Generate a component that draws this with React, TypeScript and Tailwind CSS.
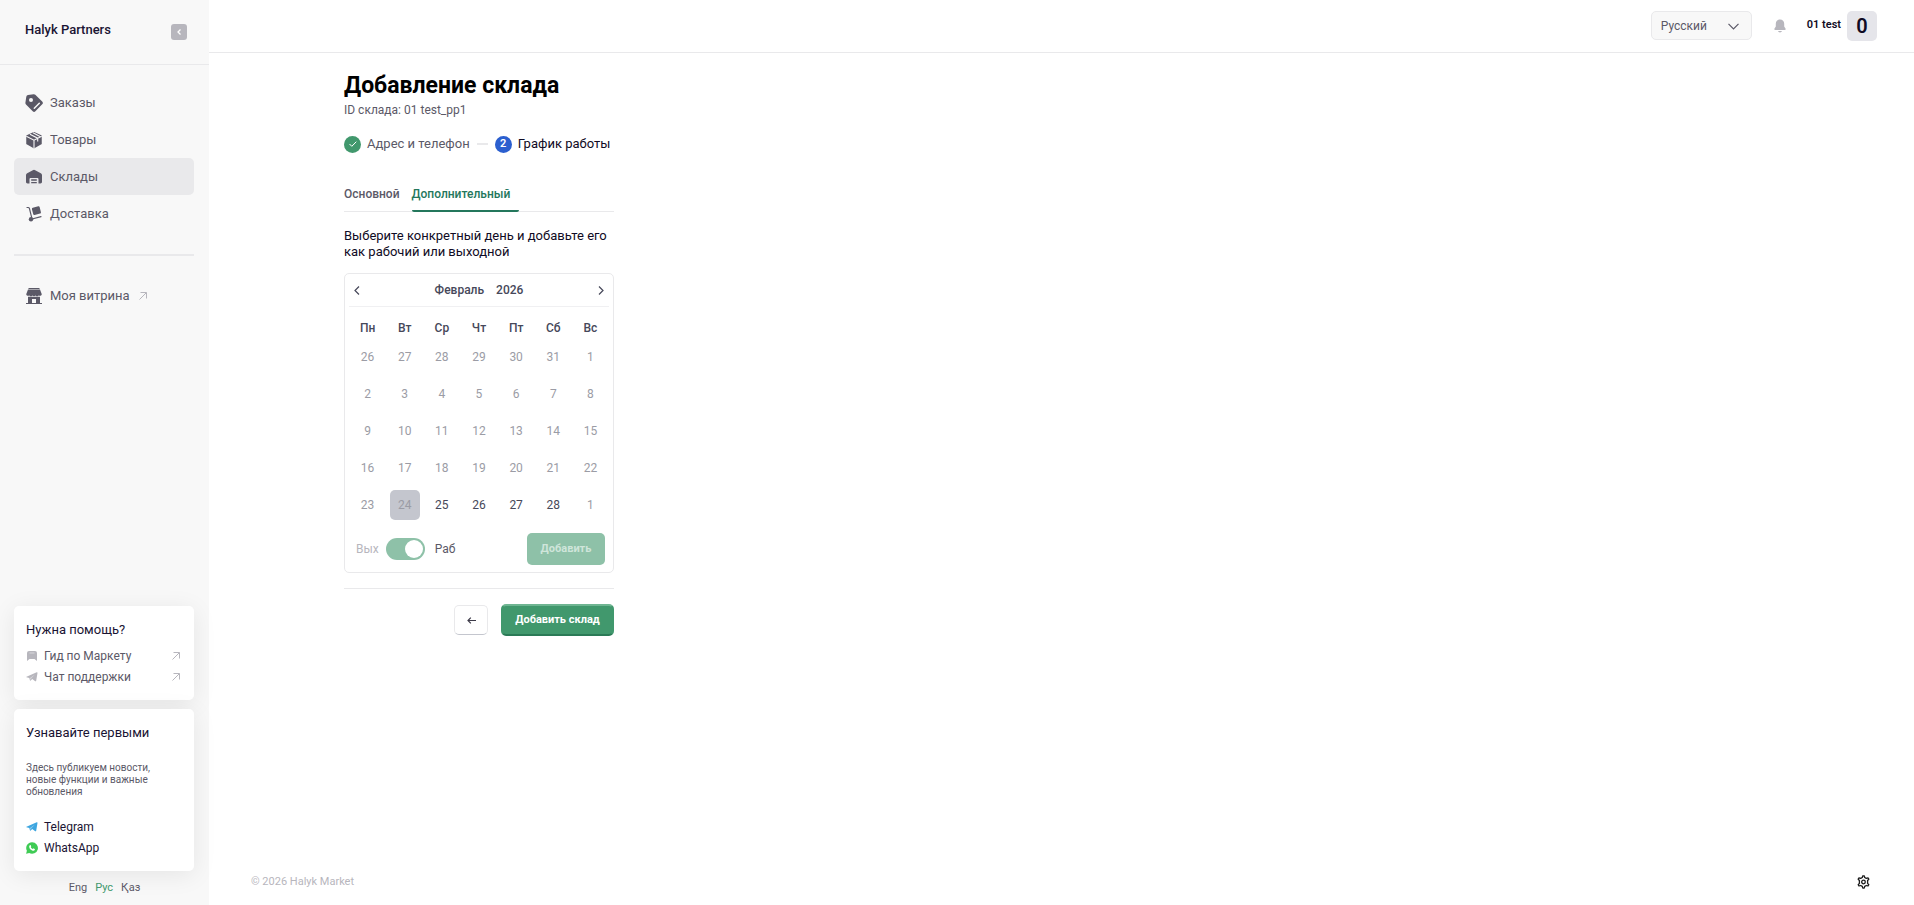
import React, { useState } from 'react';

const navItems = [
  { label: 'Заказы', icon: TagIcon },
  { label: 'Товары', icon: BoxIcon },
  { label: 'Склады', icon: WarehouseIcon },
  { label: 'Доставка', icon: TrolleyIcon },
];

const weekDays = ['Пн', 'Вт', 'Ср', 'Чт', 'Пт', 'Сб', 'Вс'];

const weeks = [
  [26, 27, 28, 29, 30, 31, 1],
  [2, 3, 4, 5, 6, 7, 8],
  [9, 10, 11, 12, 13, 14, 15],
  [16, 17, 18, 19, 20, 21, 22],
  [23, 24, 25, 26, 27, 28, 1],
];

function TagIcon() {
  return (
    <svg width="18" height="18" viewBox="0 0 18 18" fill="none">
      <path d="M3 1.1 8.6.2a2 2 0 0 1 1.7.5l6.900 6.900a1.900 1.900 0 0 1 0 2.700l-6.800 6.900a1.900 1.900 0 0 1-2.700 0L1 10.500a2 2 0 0 1-.6-1.700L1.300 2.700A2 2 0 0 1 3 1.100Z" fill="#5b5967" />
      <circle cx="6" cy="6" r="2" fill="#f8f8f8" />
      <path d="m9.300 14.300 5-5" stroke="#f8f8f8" strokeWidth="1.500" strokeLinecap="round" />
    </svg>
  );
}

function BoxIcon() {
  return (
    <svg width="18" height="18" viewBox="0 0 18 18" fill="none">
      <path d="m9 1.800 7 3.200v7.700l-7 3.800-7-3.800V5l7-3.200Z" fill="#5b5967" stroke="#5b5967" strokeWidth="1.500" strokeLinejoin="round" />
      <path d="M1.300 5.300 9 9.200l7.700-3.900M9 9.200v8.100M4.900 3.200l7.800 4v3.300M8 1.700l7.400 4" stroke="#f8f8f8" strokeWidth="1.100" />
    </svg>
  );
}

function WarehouseIcon() {
  return (
    <svg width="18" height="18" viewBox="0 0 18 18" fill="none">
      <path d="M1 7.300c0-.9.400-1.600 1.200-2L7.800 2.200a2.500 2.500 0 0 1 2.400 0l5.600 3.100c.8.400 1.200 1.100 1.200 2v6.500c0 1-.6 1.700-1.600 1.700h-1.900v-4.300c0-.8-.5-1.200-1.200-1.200H5.700c-.7 0-1.200.4-1.200 1.200v4.300H2.600c-1 0-1.600-.7-1.600-1.700V7.300Z" fill="#5b5967" />
      <path d="M6.200 12h5.600M6.200 14.700h5.600" stroke="#5b5967" strokeWidth="1.300" />
    </svg>
  );
}

function TrolleyIcon() {
  return (
    <svg width="18" height="18" viewBox="0 0 18 18" fill="none">
      <path d="M2 2.500h1.200c.6 0 1 .3 1.200.9l2.300 9.300M7 14l9-2.300" stroke="#5b5967" strokeWidth="1.200" strokeLinecap="round" />
      <circle cx="6" cy="14.200" r="2.200" fill="#5b5967" />
      <rect x="7.500" y="2" width="8" height="7.500" rx="1.200" transform="rotate(-14 11 6)" fill="#5b5967" />
    </svg>
  );
}

function ShopIcon() {
  return (
    <svg width="18" height="18" viewBox="0 0 18 18" fill="none">
      <path d="M3.500 1h11v1h-11z" fill="#5b5967" />
      <path d="M3 2.500h12l1.800 4.700a2 2 0 0 1-3.200 1.200 2 2 0 0 1-3 0 2 2 0 0 1-3.200 0 2 2 0 0 1-3 0A2 2 0 0 1 1.200 7.200L3 2.500Z" fill="#5b5967" />
      <path d="M3 9.800h12V16h2v1H1v-1h2V9.800ZM7 12v4h4v-4H7Z" fill="#5b5967" fillRule="evenodd" />
    </svg>
  );
}

function OutArrow() {
  return (
    <svg width="8" height="8" viewBox="0 0 8 8" fill="none" stroke="#b7b6bd">
      <path d="M.5 7.500 7.300.700M1.500.5h6v6" />
    </svg>
  );
}

function PlaneIcon({ color }: { color: string }) {
  return (
    <svg width="12" height="12" viewBox="0 0 12 12" fill={color}>
      <path d="M.5 5.700 10.700 1.300c.5-.2.900.1.800.6L10.200 9.800c-.1.600-.6.700-1 .4L6.200 8 4.700 9.500c-.3.300-.7.200-.8-.2L3.300 7 .5 6.200c-.4-.1-.4-.4 0-.5Z" />
      <path d="M3.900 6.900 9 3.500 5.200 7.400 4.600 9 3.900 6.900Z" fill="#fff" opacity=".4" />
    </svg>
  );
}

function WhatsAppIcon() {
  return (
    <svg width="12" height="12" viewBox="0 0 12 12" fill="none">
      <path d="M6 .2A5.800 5.800 0 1 1 3.200 11L.1 11.800.9 8.800A5.800 5.800 0 0 1 6 .2Z" fill="#3fcb55" />
      <path d="M4.200 3c.3 0 .5 0 .6.400l.4 1c.1.300-.5.700-.4.900.4.800 1.100 1.400 1.900 1.700.3.100.6-.8.9-.6l1.200.6c.2.100.1.500 0 .8-.3.700-1.300 1.200-2.200.9C4.700 8.100 3.400 6.500 3.200 5c-.1-.9.400-1.800 1-2Z" fill="#fff" />
    </svg>
  );
}

const Sidebar = () => (
  <aside className="flex w-[209px] shrink-0 flex-col bg-[#f8f8f8] text-[#5b5967]">
    <div className="flex h-[65px] items-start justify-between border-b border-[#e9e9eb] pt-5 pr-[22px] pl-[25px]">
      <span className="text-[13px] leading-5 font-medium text-[#1a1433]">Halyk Partners</span>
      <button type="button" aria-label="Свернуть меню" className="mt-1 flex size-4 items-center justify-center rounded-[3px] bg-[#b7b6bd]">
        <svg width="4" height="6" viewBox="0 0 4 6" fill="none" stroke="#fff" strokeWidth="1.300">
          <path d="M3.500.5 1 3l2.500 2.500" />
        </svg>
      </button>
    </div>

    <nav className="pt-[19px] pr-[15px] pl-3.5">
      {navItems.map(({ label, icon: Icon }) => (
        <a
          key={label}
          href="#"
          className={`flex h-[37px] items-center gap-[7px] rounded-[5px] pl-[11px] text-[13px] ${label === 'Склады' ? 'bg-[#e9e9eb]' : ''}`}
        >
          <Icon />
          {label}
        </a>
      ))}
      <hr className="mt-[22px] border-t-2 border-[#e9e9eb]" />
      <a href="#" className="mt-[21px] flex h-[37px] items-center gap-[7px] pl-[11px] text-[13px]">
        <ShopIcon />
        <span className="mr-0.5">Моя витрина</span>
        <OutArrow />
      </a>
    </nav>

    <div className="mt-auto flex flex-col gap-[9px] pr-[15px] pl-3.5">
      <section className="h-[94px] rounded-[5px] bg-white pt-[15px] pr-3.5 pl-3 shadow-[0_4px_24px_rgba(0,0,0,0.08)]">
        <h2 className="text-[13px] leading-[18px] text-[#1a1433]">Нужна помощь?</h2>
        <a href="#" className="mt-1.5 flex h-[21px] items-center text-xs">
          <svg className="mr-1.5" width="12" height="12" viewBox="0 0 12 12" fill="#b7b6bd">
            <path d="M1 11V3a2 2 0 0 1 2-2h6a2 2 0 0 1 2 2v8L8.500 9h-5L1 11Z" />
            <path d="M3.500 3h5" stroke="#d8d8dc" />
          </svg>
          <span className="mr-auto">Гид по Маркету</span>
          <OutArrow />
        </a>
        <a href="#" className="flex h-[21px] items-center text-xs">
          <span className="mr-1.5"><PlaneIcon color="#b7b6bd" /></span>
          <span className="mr-auto">Чат поддержки</span>
          <OutArrow />
        </a>
      </section>

      <section className="h-[162px] rounded-[5px] bg-white px-3 pt-[15px] shadow-[0_4px_24px_rgba(0,0,0,0.08)]">
        <h2 className="text-[13px] leading-[18px] text-[#1a1433]">Узнавайте первыми</h2>
        <p className="mt-5 w-[132px] text-[10px] leading-3">Здесь публикуем новости, новые функции и важные обновления</p>
        <a href="#" className="mt-[18px] flex h-[21px] items-center gap-1.5 text-xs text-[#1a1433]">
          <PlaneIcon color="#3ea6e0" />
          Telegram
        </a>
        <a href="#" className="flex h-[21px] items-center gap-1.5 text-xs text-[#1a1433]">
          <WhatsAppIcon />
          WhatsApp
        </a>
      </section>
    </div>

    <div className="flex h-[34px] items-center justify-center gap-2 text-[11px]">
      <button type="button">Eng</button>
      <button type="button" className="text-[#41986d]">Рус</button>
      <button type="button">Қаз</button>
    </div>
  </aside>
);

const Header = () => (
  <header className="flex h-[53px] items-start justify-end border-b border-[#e9e9eb] pt-[11px] pr-[37px]">
    <div className="relative">
      <select aria-label="Язык" className="block h-[29px] w-[101px] appearance-none rounded-[5px] border border-[#e9e9eb] bg-[#f8f8f8] pl-[9px] text-xs text-[#5b5967]">
        <option>Русский</option>
        <option>Қазақша</option>
        <option>English</option>
      </select>
      <svg className="pointer-events-none absolute top-3 right-[13px]" width="11" height="7" viewBox="0 0 11 7" fill="none" stroke="#5b5967" strokeWidth="1.200">
        <path d="m.5.800 5 5 5-5" />
      </svg>
    </div>
    <button type="button" aria-label="Уведомления" className="mr-5 ml-[21px] flex h-[29px] items-center">
      <svg width="14" height="14" viewBox="0 0 14 14" fill="#b7b6bd">
        <path d="M7 .500c2.600 0 4.200 1.800 4.200 4.300v2.700l1.300 2c.5.900.1 1.500-.8 1.500H2.300c-.9 0-1.300-.6-.8-1.500l1.300-2V4.800C2.800 2.300 4.400.500 7 .500ZM5 12h4c-.3.900-1 1.400-2 1.400S5.300 12.900 5 12Z" />
      </svg>
    </button>
    <span className="mr-1.5 text-[11px] leading-7 font-semibold text-[#100b24]">01 test</span>
    <button type="button" aria-label="Профиль" className="size-[30px] rounded-[5px] bg-[#e5e5ea] text-xl leading-7 font-semibold text-[#100b24]">0</button>
  </header>
);

const Calendar = () => {
  const [isWorking, setIsWorking] = useState(true);

  return (
    <div className="mt-[13px] rounded-[5px] border border-[#e9e9eb] px-1">
      <div className="flex h-[33px] items-center justify-between border-b border-[#f0f0f2] px-[5px] text-xs font-medium text-[#46485a]">
        <button type="button" aria-label="Предыдущий месяц">
          <svg width="6" height="9" viewBox="0 0 6 9" fill="none" stroke="#46485a" strokeWidth="1.200">
            <path d="m5 .500-4 4 4 4" />
          </svg>
        </button>
        <div className="flex gap-3">
          <button type="button">Февраль</button>
          <button type="button">2026</button>
        </div>
        <button type="button" aria-label="Следующий месяц">
          <svg width="6" height="9" viewBox="0 0 6 9" fill="none" stroke="#46485a" strokeWidth="1.200">
            <path d="m1 .500 4 4-4 4" />
          </svg>
        </button>
      </div>

      <table className="mt-1.5 w-full table-fixed text-center text-xs text-[#46485a]">
        <thead>
          <tr>
            {weekDays.map((day) => (
              <th key={day} className="h-[29px] p-0 font-medium">{day}</th>
            ))}
          </tr>
        </thead>
        <tbody>
          {weeks.map((week, row) => (
            <tr key={row}>
              {week.map((day, col) => {
                const isToday = row === 4 && day === 24;
                const isOpen = row === 4 && day > 24;
                return (
                  <td key={col} className={row === 0 ? 'p-0' : 'p-0 pt-[7px]'}>
                    <button
                      type="button"
                      disabled={!isOpen}
                      className={`mx-auto block size-[30px] rounded-[5px] ${isToday ? 'bg-[#c4c6ce]' : ''} ${isOpen ? '' : 'text-[#9b9ca5]'}`}
                    >
                      {day}
                    </button>
                  </td>
                );
              })}
            </tr>
          ))}
        </tbody>
      </table>

      <div className="flex items-center pt-[13px] pr-1 pb-[7px] pl-[7px] text-xs">
        <span className="text-[#b7b6bd]">Вых</span>
        <label className="ml-[7px] flex items-center gap-2.5 text-[#5b5967]">
          <input
            type="checkbox"
            checked={isWorking}
            onChange={(e) => setIsWorking(e.target.checked)}
            className="h-[22px] w-[39px] appearance-none rounded-full bg-[#c4c6ce] p-0.5 before:block before:size-[18px] before:rounded-full before:bg-white checked:bg-[#8ec1a8] checked:before:ml-[17px]"
          />
          Раб
        </label>
        <button type="button" disabled className="ml-auto h-8 w-[78px] rounded-[5px] bg-[#8ec1a8] text-[11px] font-bold text-[#cfe5da]">
          Добавить
        </button>
      </div>
    </div>
  );
};

const App = () => {
  return (
    <div className="flex min-h-screen bg-white font-['Roboto','Liberation_Sans',sans-serif] text-[#100b24]">
      <Sidebar />
      <div className="flex grow flex-col">
        <Header />
        <main className="ml-[135px] w-[270px] pt-[19px]">
          <h1 className="text-[23px] leading-7 font-bold whitespace-nowrap text-black">Добавление склада</h1>
          <p className="mt-0.5 text-xs leading-4 text-[#5b5967]">ID склада: 01 test_pp1</p>

          <ol className="mt-[17px] flex h-[18px] items-center text-[13px] whitespace-nowrap">
            <li className="flex items-center gap-1.5 text-[#5b5967]">
              <span className="flex size-[17px] items-center justify-center rounded-full bg-[#41986d]">
                <svg width="8" height="6" viewBox="0 0 8 6" fill="none" stroke="#fff">
                  <path d="m.5 3 2.300 2.300L7.300.700" />
                </svg>
              </span>
              Адрес и телефон
            </li>
            <li aria-hidden="true" className="mx-[7px] h-0.5 w-[11px] shrink-0 bg-[#e9e9eb]" />
            <li className="flex items-center gap-1.5">
              <span className="flex size-[17px] items-center justify-center rounded-full bg-[#2b5fcf] text-[11px] font-semibold text-white">2</span>
              График работы
            </li>
          </ol>

          <div role="tablist" className="mt-[31px] flex gap-3 border-b border-[#e9e9eb] text-xs font-medium">
            <button type="button" role="tab" aria-selected="false" className="h-[27px] pb-[7px] text-[#5b5967]">Основной</button>
            <button type="button" role="tab" aria-selected="true" className="-mb-px h-7 w-[107px] rounded-b-xs border-b-2 border-[#24775c] pb-1.5 text-left text-[#24775c]">
              Дополнительный
            </button>
          </div>

          <p className="mt-4 text-[13px] leading-4">Выберите конкретный день и добавьте его как рабочий или выходной</p>

          <Calendar />

          <div className="mt-[15px] flex items-center justify-end gap-[13px] border-t border-[#e9e9eb] pt-[15px]">
            <button type="button" aria-label="Назад" className="flex h-[30px] w-[34px] items-center justify-center rounded-[5px] border border-[#e9e9eb] border-b-[#c4c6ce]">
              <svg width="9" height="7" viewBox="0 0 9 7" fill="none" stroke="#3c3a48" strokeWidth="1.200">
                <path d="M9 3.500H1M3.800.600 1 3.500l2.800 2.900" />
              </svg>
            </button>
            <button type="button" className="h-8 w-[113px] rounded-[5px] border-2 border-[#41986d] border-t-[#6fb592] border-b-[#2b7a56] bg-[#41986d] text-[11px] font-bold text-white">
              Добавить склад
            </button>
          </div>
        </main>

        <footer className="mt-auto flex items-center justify-between pr-11 pb-[15px] pl-[42px] text-[11px] text-[#b7b6bd]">
          <span>© 2026 Halyk Market</span>
          <button type="button" aria-label="Настройки">
            <svg width="13" height="14" viewBox="0 0 13 14" fill="none" stroke="#1c1c1c" strokeWidth="1.300" strokeLinejoin="round">
              <path d="m5.300 2.500.5-1.700h1.400l.5 1.700 1.600.9 1.700-.5.800 1.300L10.600 5.500v2.900l1.200 1.300-.8 1.300-1.700-.5-1.600.9-.5 1.800H5.800l-.5-1.800-1.600-.9-1.700.5-.8-1.300 1.200-1.300V5.500L1.200 4.200 2 2.900l1.700.5 1.600-.9Z" />
              <circle cx="6.500" cy="7" r="1.800" />
            </svg>
          </button>
        </footer>
      </div>
    </div>
  );
};

export default App;
